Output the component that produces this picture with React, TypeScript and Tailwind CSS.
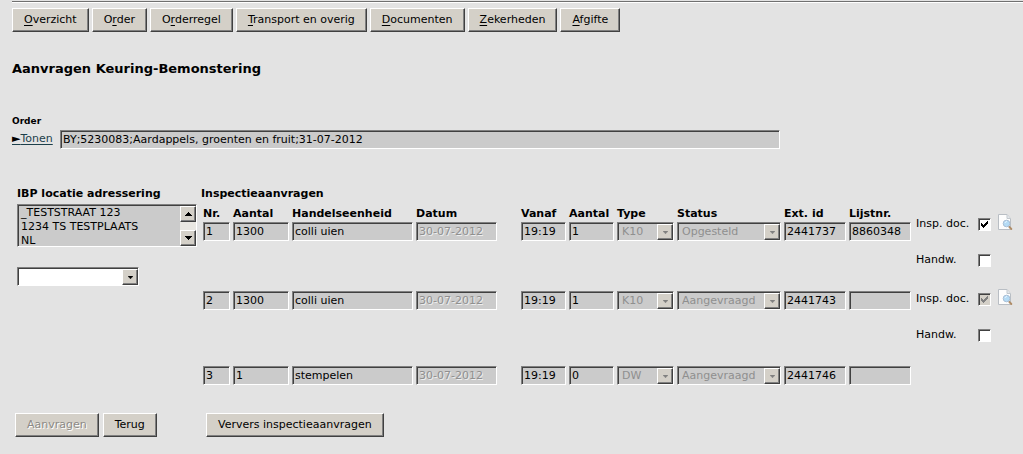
import clsx from 'clsx';
import type { ComponentProps } from 'react';

type InspectionRow = {
  nr: string;
  amount: string;
  unit: string;
  date: string;
  from: string;
  count: string;
  type: string;
  status: string;
  extId: string;
  listNr: string;
  height: string;
};

const navItems = [
  { before: '', accessKey: 'O', after: 'verzicht' },
  { before: 'O', accessKey: 'r', after: 'der' },
  { before: 'O', accessKey: 'r', after: 'derregel' },
  { before: '', accessKey: 'T', after: 'ransport en overig' },
  { before: '', accessKey: 'D', after: 'ocumenten' },
  { before: '', accessKey: 'Z', after: 'ekerheden' },
  { before: '', accessKey: 'A', after: 'fgifte' },
];

const columns = [
  { label: 'Nr.', width: 'w-[30px]' },
  { label: 'Aantal', width: 'w-[59px]' },
  { label: 'Handelseenheid', width: '' },
  { label: 'Datum', width: 'w-[105px]' },
  { label: 'Vanaf', width: 'w-[48px]' },
  { label: 'Aantal', width: 'w-[48px]' },
  { label: 'Type', width: 'w-[60px]' },
  { label: 'Status', width: 'w-[107px]' },
  { label: 'Ext. id', width: 'w-[65px]' },
  { label: 'Lijstnr.', width: 'w-[65px]' },
];

const rows: InspectionRow[] = [
  { nr: '1', amount: '1300', unit: 'colli uien', date: '30-07-2012', from: '19:19', count: '1', type: 'K10', status: 'Opgesteld', extId: '2441737', listNr: '8860348', height: 'h-[69px]' },
  { nr: '2', amount: '1300', unit: 'colli uien', date: '30-07-2012', from: '19:19', count: '1', type: 'K10', status: 'Aangevraagd', extId: '2441743', listNr: '', height: 'h-[75px]' },
  { nr: '3', amount: '1', unit: 'stempelen', date: '30-07-2012', from: '19:19', count: '0', type: 'DW', status: 'Aangevraagd', extId: '2441746', listNr: '', height: 'h-[19px]' },
];

const sunken =
  'rounded-none border border-t-[#808080] border-l-[#808080] border-r-white border-b-white shadow-[inset_1px_1px_0_#404040] outline-none';

const raised =
  'border border-t-white border-l-white border-r-[#404040] border-b-[#404040] bg-[#d4d0c8] shadow-[inset_-1px_-1px_0_#808080]';

function Button({ className, ...props }: ComponentProps<'button'>) {
  return (
    <button
      type="button"
      className={clsx(
        raised,
        'h-6 whitespace-nowrap px-[11px] leading-[22px] disabled:text-[#8c8a86] disabled:[text-shadow:1px_1px_0_white]',
        className,
      )}
      {...props}
    />
  );
}

function Field({ className, ...props }: ComponentProps<'input'>) {
  return (
    <input
      type="text"
      readOnly
      className={clsx(
        sunken,
        'block h-[19px] w-full min-w-0 bg-[#cbcbcb] px-0.5 leading-[17px] disabled:text-[#8f8f8f] disabled:[text-shadow:1px_1px_0_#eee]',
        className,
      )}
      {...props}
    />
  );
}

function Arrow({ up = false, small = false }: { up?: boolean; small?: boolean }) {
  return (
    <svg viewBox="0 0 7 4" className={small ? 'h-[3px] w-[5px]' : 'h-1 w-[7px]'} fill="currentColor" aria-hidden="true">
      <path d={up ? 'M3 0h1v1h1v1h1v1h1v1H0V3h1V2h1V1h1z' : 'M0 0h7v1H6v1H5v1H4v1H3V3H2V2H1V1H0z'} />
    </svg>
  );
}

function Select({ value, label, disabled }: { value: string; label: string; disabled?: boolean }) {
  return (
    <div className="relative h-[19px]">
      <select
        aria-label={label}
        disabled={disabled}
        defaultValue={value}
        className={clsx(
          sunken,
          'block h-[19px] w-full appearance-none pl-1 leading-[17px] opacity-100',
          disabled ? 'bg-[#cbcbcb] text-[#8f8f8f]' : 'bg-white',
        )}
      >
        <option value={value}>{value}</option>
      </select>
      <span
        className={clsx(
          raised,
          'pointer-events-none absolute top-0.5 right-px flex h-4 w-4 items-center justify-center',
          disabled ? 'text-[#808080]' : 'text-black',
        )}
      >
        <Arrow small />
      </span>
    </div>
  );
}

function Checkbox({ id, checked = false, disabled = false }: { id: string; checked?: boolean; disabled?: boolean }) {
  return (
    <span className="relative block size-[13px]">
      <input
        id={id}
        type="checkbox"
        defaultChecked={checked}
        disabled={disabled}
        className={clsx(
          sunken,
          'peer block size-[13px] appearance-none',
          disabled ? 'bg-[#d4d0c8]' : 'bg-white',
        )}
      />
      <svg
        viewBox="0 0 13 13"
        className={clsx(
          'pointer-events-none absolute inset-0 hidden size-[13px] peer-checked:block',
          disabled ? 'text-[#808080]' : 'text-black',
        )}
        fill="currentColor"
        aria-hidden="true"
      >
        <path d="M3 5h1v1h1v1h1V6h1V5h1V4h1V3h1v3H9v1H8v1H7v1H6v1H5V9H4V8H3z" />
      </svg>
    </span>
  );
}

function PreviewIcon() {
  return (
    <svg viewBox="0 0 16 17" className="h-[17px] w-4" aria-hidden="true">
      <path d="M1.5.5h8.5l3.5 4v11h-12z" fill="#fdfdfd" stroke="#b9bec4" />
      <path d="M10 .5v4h3.5" fill="#e3e8ec" stroke="#c3c8cd" />
      <path d="M12.3 12.8l2 2.2" stroke="#b08d68" strokeWidth="2" strokeLinecap="round" />
      <circle cx="9.5" cy="9.5" r="3.3" fill="#b5dbf5" stroke="#a9bfd6" />
      <path d="M8 9a2 2 0 0 1 2-1.5" fill="none" stroke="#e6f5ff" />
    </svg>
  );
}

function DocumentChecks({ nr, checked, disabled }: { nr: number; checked?: boolean; disabled?: boolean }) {
  return (
    <div className="h-[75px]">
      <div className="flex h-5 items-center">
        <label htmlFor={`insp-${nr}`} className="w-[62px] whitespace-nowrap">Insp. doc.</label>
        <Checkbox id={`insp-${nr}`} checked={checked} disabled={disabled} />
        <button type="button" aria-label="Document bekijken" className="-mt-1 ml-1.5">
          <PreviewIcon />
        </button>
      </div>
      <div className="mt-4 flex h-5 items-center">
        <label htmlFor={`handw-${nr}`} className="w-[62px]">Handw.</label>
        <Checkbox id={`handw-${nr}`} />
      </div>
    </div>
  );
}

function InspectionTable() {
  return (
    <table className="w-full table-fixed border-separate border-spacing-0">
      <thead>
        <tr className="h-4">
          {columns.map((column, index) => (
            <th key={index} scope="col" className={clsx('p-0 text-left leading-4 whitespace-nowrap', column.width)}>
              {column.label}
            </th>
          ))}
        </tr>
      </thead>
      <tbody>
        {rows.map((row) => (
          <tr key={row.nr} className={clsx('align-top *:p-0 *:pr-[3px]', row.height)}>
            <td><Field aria-label="Nr." value={row.nr} /></td>
            <td><Field aria-label="Aantal" value={row.amount} /></td>
            <td><Field aria-label="Handelseenheid" value={row.unit} /></td>
            <td className="pr-6!"><Field aria-label="Datum" value={row.date} disabled /></td>
            <td><Field aria-label="Vanaf" value={row.from} /></td>
            <td><Field aria-label="Aantal" value={row.count} /></td>
            <td><Select label="Type" value={row.type} disabled /></td>
            <td><Select label="Status" value={row.status} disabled /></td>
            <td><Field aria-label="Ext. id" value={row.extId} /></td>
            <td><Field aria-label="Lijstnr." value={row.listNr} /></td>
          </tr>
        ))}
      </tbody>
    </table>
  );
}

function AddressPanel() {
  return (
    <section className="w-[185px] shrink-0 pl-[5px]">
      <h2 className="font-bold leading-4">
        <label htmlFor="address">IBP locatie adressering</label>
      </h2>
      <div className="relative mt-0.5 h-[43px]">
        <textarea
          id="address"
          readOnly
          className={clsx(sunken, 'block h-[43px] w-full resize-none overflow-hidden bg-[#cbcbcb] pt-px pl-[3px] leading-[14px]')}
          defaultValue={'_TESTSTRAAT 123\n1234 TS TESTPLAATS\nNL'}
        />
        <div className="absolute top-0.5 right-px bottom-px flex w-4 flex-col justify-between bg-[#e9e7e2]">
          <button type="button" aria-label="Omhoog" className={clsx(raised, 'flex h-4 items-center justify-center')}>
            <Arrow up />
          </button>
          <button type="button" aria-label="Omlaag" className={clsx(raised, 'flex h-4 items-center justify-center')}>
            <Arrow />
          </button>
        </div>
      </div>
      <div className="mt-5 w-[122px]">
        <Select label="Locatie" value="" />
      </div>
    </section>
  );
}

export default function App() {
  return (
    <div className="min-h-screen bg-[#e3e3e3] pt-px pl-3 font-['DejaVu_Sans',Verdana,sans-serif] text-[11px] text-black">
      <nav className="flex flex-wrap gap-[3px] border-t border-[#707070] pt-1.5 shadow-[inset_0_1px_0_white]">
        {navItems.map((item) => (
          <Button key={item.before + item.accessKey + item.after}>
            {item.before}
            <u className="underline-offset-2">{item.accessKey}</u>
            {item.after}
          </Button>
        ))}
      </nav>

      <h1 className="mt-7 text-[13px] font-bold leading-[18px]">Aanvragen Keuring-Bemonstering</h1>

      <section className="mt-[37px] max-w-[768px]">
        <h2 className="text-[9px] font-bold leading-3">
          <label htmlFor="order">Order</label>
        </h2>
        <div className="mt-[3px] flex items-center">
          <a href="#order" className="w-12 shrink-0 whitespace-nowrap text-[#1c3f4a] underline underline-offset-2">
            <span className="text-black">►</span>Tonen
          </a>
          <Field id="order" value="BY;5230083;Aardappels, groenten en fruit;31-07-2012" />
        </div>
      </section>

      <main className="mt-[37px] flex">
        <AddressPanel />
        <section className="min-w-[640px] flex-1 pl-1">
          <h2 className="font-bold leading-4">Inspectieaanvragen</h2>
          <div className="mt-1 pl-0.5">
            <InspectionTable />
          </div>
        </section>
        <section className="w-[109px] shrink-0 pt-7 pl-0.5">
          <DocumentChecks nr={1} checked />
          <DocumentChecks nr={2} checked disabled />
        </section>
      </main>

      <footer className="mt-7 flex pb-4 pl-[3px]">
        <div className="flex w-[191px] gap-1">
          <Button disabled>Aanvragen</Button>
          <Button>Terug</Button>
        </div>
        <Button>Ververs inspectieaanvragen</Button>
      </footer>
    </div>
  );
}
